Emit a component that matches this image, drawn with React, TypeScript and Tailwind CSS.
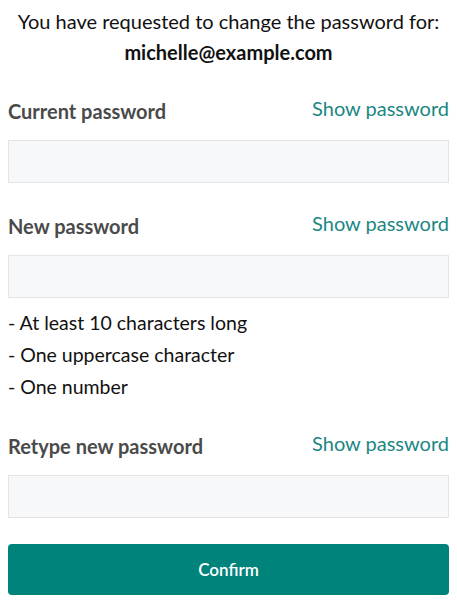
import React from "react";

const font = { fontFamily: "Lato, 'Open Sans', sans-serif" };

function FieldLabel({ label }: { label: string }) {
  return (
    <div className="flex h-6 items-center justify-between">
      <span className="pt-[3px] text-[20px] font-bold text-[#4a4a4a]">{label}</span>
      <button className="pb-[3px] text-[20px] text-[#1b8783]">Show password</button>
    </div>
  );
}

function PasswordInput() {
  return (
    <input
      type="password"
      className="mt-[19px] block h-[43px] w-full border border-[#e5e5e5] bg-[#f7f8fa] px-3 outline-none"
    />
  );
}

export default function App() {
  return (
    <div className="min-h-screen bg-white px-2 text-[#111]" style={font}>
      <div className="pt-[6px] text-center text-[20px] leading-[31px]">
        <p>You have requested to change the password for:</p>
        <p className="font-bold">michelle@example.com</p>
      </div>

      <div className="mt-[29px]">
        <FieldLabel label="Current password" />
        <PasswordInput />
      </div>

      <div className="mt-[29px]">
        <FieldLabel label="New password" />
        <PasswordInput />
      </div>

      <ul className="mt-[9px] text-[19.5px] leading-[32px]">
        <li>- At least 10 characters long</li>
        <li>- One uppercase character</li>
        <li>- One number</li>
      </ul>

      <div className="mt-[29px]">
        <FieldLabel label="Retype new password" />
        <PasswordInput />
      </div>

      <button className="mt-[26px] h-[51px] w-full rounded bg-[#00837b] text-[17px] font-semibold text-white">
        Confirm
      </button>
    </div>
  );
}
